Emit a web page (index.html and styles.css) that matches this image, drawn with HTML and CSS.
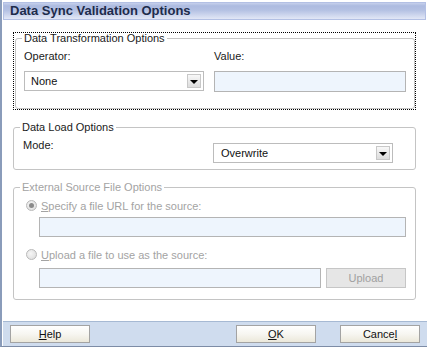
FILE: index.html
```html
<!DOCTYPE html>
<html lang="en">
<head>
    <meta charset="UTF-8">
    <title>Data Sync Validation Options</title>
    <link rel="stylesheet" href="styles.css">
</head>
<body>

    <div class="dialog">
        <div class="titlebar">Data Sync Validation Options</div>

        <div class="content">
            <!-- Grupo con foco (borde punteado) -->
            <div class="focus-ring">
                <fieldset class="group group-transform">
                    <legend>Data Transformation Options</legend>
                    <div class="transform-grid">
                        <div class="field">
                            <label class="field-label">Operator:</label>
                            <div class="combo combo-top">
                                <span class="combo-text">None</span>
                                <span class="combo-btn"></span>
                            </div>
                        </div>
                        <div class="field">
                            <label class="field-label">Value:</label>
                            <input type="text" class="text-field value-field">
                        </div>
                    </div>
                </fieldset>
            </div>

            <fieldset class="group group-load">
                <legend>Data Load Options</legend>
                <div class="load-grid">
                    <label class="field-label">Mode:</label>
                    <div class="combo combo-mode">
                        <span class="combo-text">Overwrite</span>
                        <span class="combo-btn"></span>
                    </div>
                </div>
            </fieldset>

            <fieldset class="group group-source disabled">
                <legend>External Source File Options</legend>
                <div class="radio-row">
                    <span class="radio checked"></span>
                    <span class="radio-label"><u>S</u>pecify a file URL for the source:</span>
                </div>
                <input type="text" class="text-field url-field" disabled>

                <div class="radio-row second">
                    <span class="radio"></span>
                    <span class="radio-label"><u>U</u>pload a file to use as the source:</span>
                </div>
                <div class="upload-row">
                    <input type="text" class="text-field upload-field" disabled>
                    <button class="upload-btn" disabled>Upload</button>
                </div>
            </fieldset>
        </div>

        <div class="footer">
            <button class="btn"><u>H</u>elp</button>
            <div class="spacer"></div>
            <button class="btn"><u>O</u>K</button>
            <button class="btn btn-cancel">Cance<u>l</u></button>
        </div>
    </div>

</body>
</html>
```

FILE: styles.css
```css
body {
    margin: 0;
    background-color: #ffffff;
    font-family: "Liberation Sans", Arial, sans-serif;
    font-size: 11px;
    color: #1a1a1a;
}

.dialog {
    box-sizing: border-box;
    width: 427px;
    height: 347px;
    border-left: 2px solid #8a9cba;
    border-bottom: 1px solid #7d8ca6;
    display: flex;
    flex-direction: column;
}

.titlebar {
    box-sizing: border-box;
    height: 18px;
    margin: 2px 1px 0 1px;
    padding-left: 6px;
    border: 1px solid #b3c0e4;
    background: linear-gradient(to bottom, #c6d0ec 0, #adbbe0 18%, #b4c1e3 45%, #e2e7f6 100%);
    font-size: 13px;
    font-weight: bold;
    line-height: 16px;
    color: #1e2c4c;
}

.content {
    padding: 12px 11px 0 11px;
}

.focus-ring {
    border: 1px dotted #000000;
    padding: 0 1px;
}

.group {
    margin: 0;
    padding: 0;
    border: 1px solid #c4c4c4;
    border-radius: 3px;
}

.group legend {
    margin-left: 6px;
    padding: 0 2px;
    font-size: 11px;
    line-height: 10px;
    color: #1a1a1a;
}

.field-label {
    display: block;
    line-height: 13px;
    color: #1a1a1a;
}

/* primer grupo */
.transform-grid {
    display: grid;
    grid-template-columns: 180px 192px;
    column-gap: 10px;
    padding: 7px 8px 16px 8px;
}

.field .field-label {
    margin-bottom: 8px;
}

.text-field {
    display: block;
    box-sizing: border-box;
    margin: 0;
    padding: 0 4px;
    border: 1px solid #b4b4b4;
    background-color: #eef5fd;
    font-family: inherit;
    font-size: 11px;
    outline: none;
}

.value-field {
    width: 192px;
    height: 21px;
}

.combo {
    box-sizing: border-box;
    height: 20px;
    border: 1px solid #bcbcbc;
    background-color: #ffffff;
    display: flex;
    align-items: center;
    padding: 0 2px 0 6px;
}

.combo-top {
    width: 180px;
    margin-top: 1px;
}

.combo-text {
    flex: 1;
    color: #111111;
}

.combo-btn {
    box-sizing: border-box;
    width: 14px;
    height: 14px;
    border: 1px solid #c8c8c8;
    background: linear-gradient(to bottom, #f8f8f8, #dcdcdc);
    display: flex;
    align-items: center;
    justify-content: center;
}

.combo-btn::after {
    content: "";
    border-left: 4px solid transparent;
    border-right: 4px solid transparent;
    border-top: 4px solid #000000;
    margin-top: 1px;
}

/* segundo grupo */
.group-load {
    margin-top: 12px;
}

.load-grid {
    display: grid;
    grid-template-columns: 190px 180px;
    padding: 7px 0 6px 9px;
}

.combo-mode {
    margin-top: 4px;
    padding-left: 7px;
}

/* tercer grupo (deshabilitado) */
.group-source {
    margin-top: 12px;
    padding: 7px 9px 11px 12px;
}

.group-source legend {
    margin-left: -6px;
}

.disabled legend,
.disabled .radio-label {
    color: #a3a3a3;
}

.radio-row {
    display: flex;
    align-items: center;
    height: 13px;
}

.radio-row.second {
    margin-top: 11px;
}

.radio {
    box-sizing: border-box;
    width: 11px;
    height: 11px;
    border: 1px solid #b9b9b9;
    border-radius: 50%;
    background: radial-gradient(circle at 40% 40%, #f6f6f6, #dadada);
    margin-right: 4px;
    position: relative;
}

.radio.checked::after {
    content: "";
    position: absolute;
    left: 2px;
    top: 2px;
    width: 5px;
    height: 5px;
    border-radius: 50%;
    background-color: #8a8a8a;
}

.url-field {
    width: 367px;
    height: 20px;
    margin: 5px 0 0 13px;
}

.upload-row {
    display: flex;
    margin: 7px 0 0 13px;
}

.upload-field {
    width: 282px;
    height: 20px;
}

.upload-btn {
    box-sizing: border-box;
    width: 80px;
    height: 20px;
    margin-left: 5px;
    border: 1px solid #c6c6c6;
    background-color: #e6e6e6;
    font-family: inherit;
    font-size: 11px;
    color: #a0a0a0;
}

/* barra inferior */
.footer {
    margin-top: auto;
    margin-left: 1px;
    height: 24px;
    border-top: 1px solid #a6b9d3;
    background-color: #cfdcee;
    display: flex;
    align-items: center;
    padding: 0 7px;
}

.spacer {
    flex: 1;
}

.btn {
    box-sizing: border-box;
    width: 80px;
    height: 18px;
    padding: 0;
    border: 1px solid #a3a3a3;
    background: linear-gradient(to bottom, #ffffff 0, #f7f6f1 50%, #ebe8da 100%);
    font-family: inherit;
    font-size: 11px;
    color: #111111;
}

.btn-cancel {
    margin-left: 24px;
}
```
